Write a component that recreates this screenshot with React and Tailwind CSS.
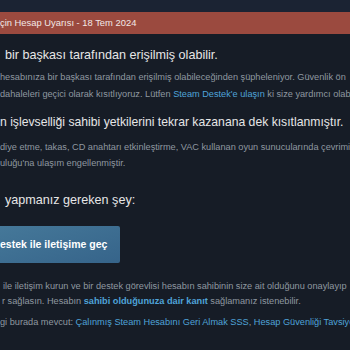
export default function App() {
  const font = { fontFamily: '"Liberation Sans", Arial, sans-serif' };
  return (
    <div className="w-[350px] h-[350px] overflow-hidden bg-[#161c26] text-[#8f98a0]" style={font}>
      <div className="h-[12px] bg-[#1b2333]" />
      <div className="h-[22px] bg-[#9b4a3f] flex items-center text-[9.4px] text-[#f2e8e6] whitespace-nowrap">
        <span>çin Hesap Uyarısı - 18 Tem 2024</span>
      </div>
      <div className="whitespace-nowrap">
        <div className="mt-[13px] pl-[5px] text-[12.6px] leading-[16px] text-[#e6e6e6]">bir başkası tarafından erişilmiş olabilir.</div>
        <div className="mt-[6px] text-[9.2px] leading-[17px]">
          <div>hesabınıza bir başkası tarafından erişilmiş olabileceğinden şüpheleniyor. Güvenlik ön</div>
          <div>dahaleleri geçici olarak kısıtlıyoruz. Lütfen <span className="text-[#4fa3d8]">Steam Destek'e ulaşın</span> ki size yardımcı olabilir.</div>
        </div>
        <div className="mt-[11px] text-[12.2px] leading-[16px] text-[#e6e6e6]">n işlevselliği sahibi yetkilerini tekrar kazanana dek kısıtlanmıştır.</div>
        <div className="mt-[9px] text-[9.2px] leading-[16px]">
          <div>diye etme, takas, CD anahtarı etkinleştirme, VAC kullanan oyun sunucularında çevrimiçi</div>
          <div>uluğu'na ulaşım engellenmiştir.</div>
        </div>
        <div className="mt-[21px] pl-[5px] text-[12.6px] leading-[16px] text-[#e6e6e6]">yapmanız gereken şey:</div>
        <div className="mt-[18px] w-[120px] h-[37px] rounded-r-[2px] bg-gradient-to-br from-[#457899] to-[#36648a] flex items-center text-[10.5px] font-bold text-white">
          <span>estek ile iletişime geç</span>
        </div>
        <div className="mt-[16px] text-[9.2px] leading-[15px]">
          <div className="pl-[3px]">ile iletişim kurun ve bir destek görevlisi hesabın sahibinin size ait olduğunu onaylayıp</div>
          <div className="pl-[2px]">r sağlasın. Hesabın <span className="text-[#4fa3d8] font-bold">sahibi olduğunuza dair kanıt</span> sağlamanız istenebilir.</div>
        </div>
        <div className="mt-[6px] text-[9.2px] leading-[15px]">
          gi burada mevcut: <span className="text-[#4fa3d8]">Çalınmış Steam Hesabını Geri Almak SSS</span>, <span className="text-[#4fa3d8]">Hesap Güvenliği Tavsiyeleri</span>
        </div>
      </div>
    </div>
  );
}
